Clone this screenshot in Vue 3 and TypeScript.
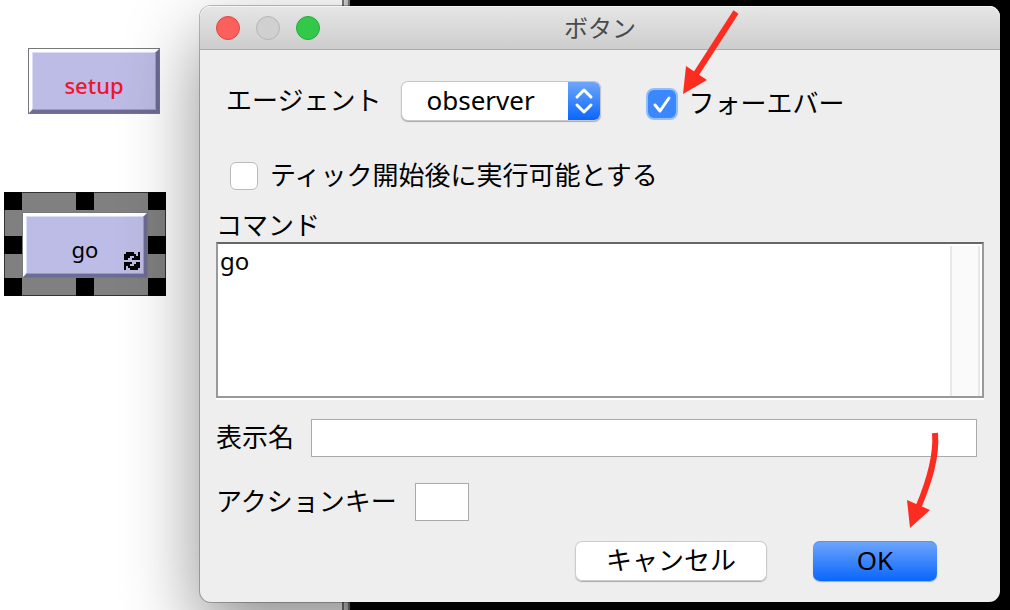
<script setup lang="ts">
import { ref } from 'vue'

const agent = ref('observer')
const forever = ref(true)
const ticks = ref(false)
const command = ref('go')
const displayName = ref('')
const actionKey = ref('')
</script>

<template>
  <main class="desktop">
    <section class="canvas" aria-label="インターフェイス">
      <button type="button" class="widget setup">setup</button>
      <div class="selection">
        <button type="button" class="widget go">
          go
          <svg class="loop" viewBox="0 0 16 18" shape-rendering="crispEdges" aria-hidden="true">
            <path d="M2 0H10V2H12V4H14V0H16V8H8V6H10V4H6V6H4V8H0V2H2Z" />
            <path d="M14 18H6V16H4V14H2V18H0V10H8V12H6V14H10V12H12V10H16V16H14Z" />
          </svg>
        </button>
        <i v-for="n in 8" :key="n" class="handle" :class="'h' + n"></i>
      </div>
    </section>

    <form class="dialog" @submit.prevent>
      <header class="titlebar">
        <div class="lights">
          <button type="button" class="light close" aria-label="閉じる"></button>
          <button type="button" class="light minimize" aria-label="しまう" disabled></button>
          <button type="button" class="light zoom" aria-label="拡大"></button>
        </div>
        <h1>ボタン</h1>
      </header>

      <div class="body">
        <div class="row agent-row">
          <label for="agent">エージェント</label>
          <span class="picker">
            <select id="agent" v-model="agent">
              <option>observer</option>
              <option>turtles</option>
              <option>patches</option>
              <option>links</option>
            </select>
            <span class="stepper">
              <svg viewBox="0 0 32 38" aria-hidden="true">
                <path d="M9 15L16 8L23 15M9 23L16 30L23 23" />
              </svg>
            </span>
          </span>
          <label class="forever">
            <input v-model="forever" type="checkbox" />
            <svg class="tick" viewBox="0 0 32 32" aria-hidden="true"><path d="M9 17L14 23L23 10" /></svg>
            <span>フォーエバー</span>
          </label>
        </div>

        <label class="row ticks">
          <input v-model="ticks" type="checkbox" />
          <span>ティック開始後に実行可能とする</span>
        </label>

        <label for="command" class="command-label">コマンド</label>
        <div class="editor">
          <textarea id="command" v-model="command" spellcheck="false"></textarea>
          <div class="track"></div>
        </div>

        <div class="row name-row">
          <label for="display-name">表示名</label>
          <input id="display-name" v-model="displayName" class="field" type="text" />
        </div>
        <div class="row key-row">
          <label for="action-key">アクションキー</label>
          <input id="action-key" v-model="actionKey" class="field key" type="text" maxlength="1" />
        </div>

        <footer class="actions">
          <button type="button" class="cancel">キャンセル</button>
          <button type="submit" class="ok">OK</button>
        </footer>
      </div>

      <svg class="arrow arrow-top" viewBox="0 0 60 88" aria-hidden="true">
        <path class="shaft" d="M56 6L16 68" />
        <path class="head" d="M3 88L6 60L27 74Z" />
      </svg>
      <svg class="arrow arrow-bottom" viewBox="0 0 36 100" aria-hidden="true">
        <path class="shaft" d="M28 3C30 27 22 52 11 78" />
        <path class="head" d="M3 98L0 70L23 80Z" />
      </svg>
    </form>
  </main>
</template>

<style>
body {
  margin: 0;
}
</style>

<style scoped>
* {
  box-sizing: border-box;
}

.desktop {
  display: flex;
  align-items: flex-start;
  min-height: 100vh;
  overflow: hidden;
  background: linear-gradient(90deg, #fff 342px, #777 342px, #777 344px, #d8d8d8 344px, #c0c0c0 348px, #777 348px, #777 350px, #000 350px);
  color: #000;
  font-family: "Noto Sans", "Noto Sans CJK JP", sans-serif;
  font-size: 26px;
}

button,
input,
select,
textarea {
  margin: 0;
  font: inherit;
  color: inherit;
}

.canvas {
  flex: 0 0 200px;
  padding: 48px 0 0 4px;
}

.widget {
  display: flex;
  align-items: center;
  justify-content: center;
  padding: 7px 0 0;
  border: 4px solid;
  border-color: #fff #6c6c94 #6c6c94 #fff;
  outline: 1px solid #77777f;
  outline-offset: -1px;
  background: #bcbce6;
  box-shadow: inset -1px -1px #9a9ac4, inset 1px 1px #dedef5;
  font-size: 22px;
  line-height: 30px;
}

.setup {
  width: 132px;
  height: 66px;
  margin-left: 24px;
  color: #f0142d;
  font-weight: 500;
}

.selection {
  position: relative;
  width: 162px;
  margin-top: 78px;
  padding: 19px 17px 17px;
  border: 1px solid #333;
  background: #808080;
}

.go {
  position: relative;
  width: 126px;
  height: 66px;
}

.loop {
  position: absolute;
  right: 4px;
  bottom: 4px;
  width: 16px;
  height: 18px;
}

.handle {
  position: absolute;
  width: 18px;
  height: 18px;
  background: #000;
}

.h1, .h2, .h3 { top: -1px; }
.h4, .h5 { top: 43px; }
.h6, .h7, .h8 { bottom: -1px; }
.h1, .h4, .h6 { left: -1px; }
.h2, .h7 { left: 71px; }
.h3, .h5, .h8 { right: -1px; }

.dialog {
  position: relative;
  flex: 1;
  min-width: 0;
  margin: 6px 10px 8px 0;
  border-radius: 11px;
  background: #eee;
  box-shadow: 0 0 0 1px rgba(0, 0, 0, 0.25), 0 30px 76px rgba(0, 0, 0, 0.45);
}

.titlebar {
  display: grid;
  grid-template-columns: 1fr auto 1fr;
  align-items: center;
  height: 44px;
  padding: 0 16px;
  border-bottom: 1px solid #aaa;
  border-radius: 11px 11px 0 0;
  background: linear-gradient(#e6e6e6, #cdcdcd);
  box-shadow: inset 0 1px #f5f5f5;
}

.lights {
  display: flex;
  gap: 16px;
}

.light {
  width: 24px;
  height: 24px;
  padding: 0;
  border: 1px solid;
  border-radius: 50%;
}

.close { border-color: #e2463f; background: #fc605c; }
.minimize { border-color: #b5b5b5; background: #d0d0d0; }
.zoom { border-color: #24ac38; background: #34c84a; }

h1 {
  margin: 0;
  color: #4a4a4a;
  font-size: 24px;
  font-weight: 400;
  line-height: 36px;
}

.body {
  padding: 32px 16px 21px;
}

.row {
  display: flex;
  align-items: center;
  line-height: 34px;
}

.row > label[for],
.row > span:last-child {
  padding-bottom: 2px;
}

.agent-row {
  height: 38px;
  padding-left: 10px;
}

.picker {
  position: relative;
  display: flex;
  width: 198px;
  height: 38px;
  margin-left: 21px;
  overflow: hidden;
  border-radius: 6px;
  box-shadow: 0 0 0 1px #c6c6c6, 0 1px 1px 1px #aaa;
}

.picker select {
  width: 100%;
  padding: 0 34px 2px 24px;
  border: 0;
  appearance: none;
  background: #fff;
  line-height: 36px;
}

.stepper {
  position: absolute;
  top: 0;
  right: 0;
  width: 32px;
  height: 38px;
  background: linear-gradient(#6fa6fb, #0a66fb);
  pointer-events: none;
}

.stepper svg {
  display: block;
}

.stepper path,
.tick path {
  fill: none;
  stroke: #fff;
  stroke-width: 3;
  stroke-linecap: round;
  stroke-linejoin: round;
}

.forever {
  position: relative;
  display: flex;
  align-items: center;
  gap: 10px;
  margin-left: 46px;
  padding-top: 6px;
}

.forever > span {
  padding-bottom: 2px;
}

input[type="checkbox"] {
  flex: none;
  appearance: none;
  width: 28px;
  height: 28px;
  border: 1px solid #bbb;
  border-radius: 6px;
  background: #fff;
}

.forever input[type="checkbox"] {
  width: 32px;
  height: 32px;
  border: 2px solid #92c0f6;
  border-radius: 8px;
  background: #3b87fd;
}

.tick {
  position: absolute;
  left: 0;
  width: 32px;
  height: 32px;
  pointer-events: none;
}

input:not(:checked) + .tick {
  display: none;
}

.ticks {
  height: 40px;
  margin-top: 36px;
  padding-left: 14px;
  gap: 12px;
}

.command-label {
  display: block;
  padding-top: 12px;
  line-height: 34px;
}

.editor {
  display: flex;
  height: 156px;
  border: 2px solid #999;
  border-top-color: #666;
  background: #fff;
  box-shadow: 0 2px #fff;
}

textarea {
  flex: 1;
  min-width: 0;
  padding: 0 2px;
  border: 0;
  outline: 0;
  resize: none;
  background: transparent;
  font-family: "Noto Sans", "Noto Sans CJK JP", sans-serif;
  font-size: 24px;
  line-height: 34px;
}

.track {
  width: 30px;
  margin: 2px 2px 0 0;
  border: 2px solid #e8e8e8;
  border-width: 0 2px;
  background: #fafafa;
}

.name-row {
  margin-top: 21px;
  padding-right: 7px;
  gap: 17px;
}

.field {
  flex: 1;
  min-width: 0;
  height: 38px;
  padding: 0 4px;
  border: 1px solid #aaa;
  border-radius: 0;
  background: #fff;
}

.key-row {
  margin-top: 26px;
  gap: 18px;
}

.key {
  flex: 0 0 54px;
}

.actions {
  display: flex;
  justify-content: flex-end;
  gap: 46px;
  margin-top: 20px;
  padding-right: 47px;
}

.actions button {
  height: 40px;
  padding: 0 0 2px;
  border: 0;
  border-radius: 7px;
  line-height: 36px;
}

.cancel {
  width: 192px;
  background: #fff;
  box-shadow: inset 0 0 0 1px #ccc, 0 1px 1px #aaa;
}

.ok {
  width: 124px;
  background: linear-gradient(#6fa6fb, #0a66fb);
  box-shadow: inset 0 1px #5b91e8, 0 1px 1px #aaa;
}

.arrow {
  position: absolute;
  overflow: visible;
  pointer-events: none;
}

.arrow-top {
  top: 0;
  left: 480px;
  width: 60px;
  height: 88px;
}

.arrow-bottom {
  right: 57px;
  bottom: 72px;
  width: 36px;
  height: 100px;
}

.shaft {
  fill: none;
  stroke: #fc2d20;
  stroke-width: 6;
}

.head {
  fill: #fc2d20;
}
</style>
